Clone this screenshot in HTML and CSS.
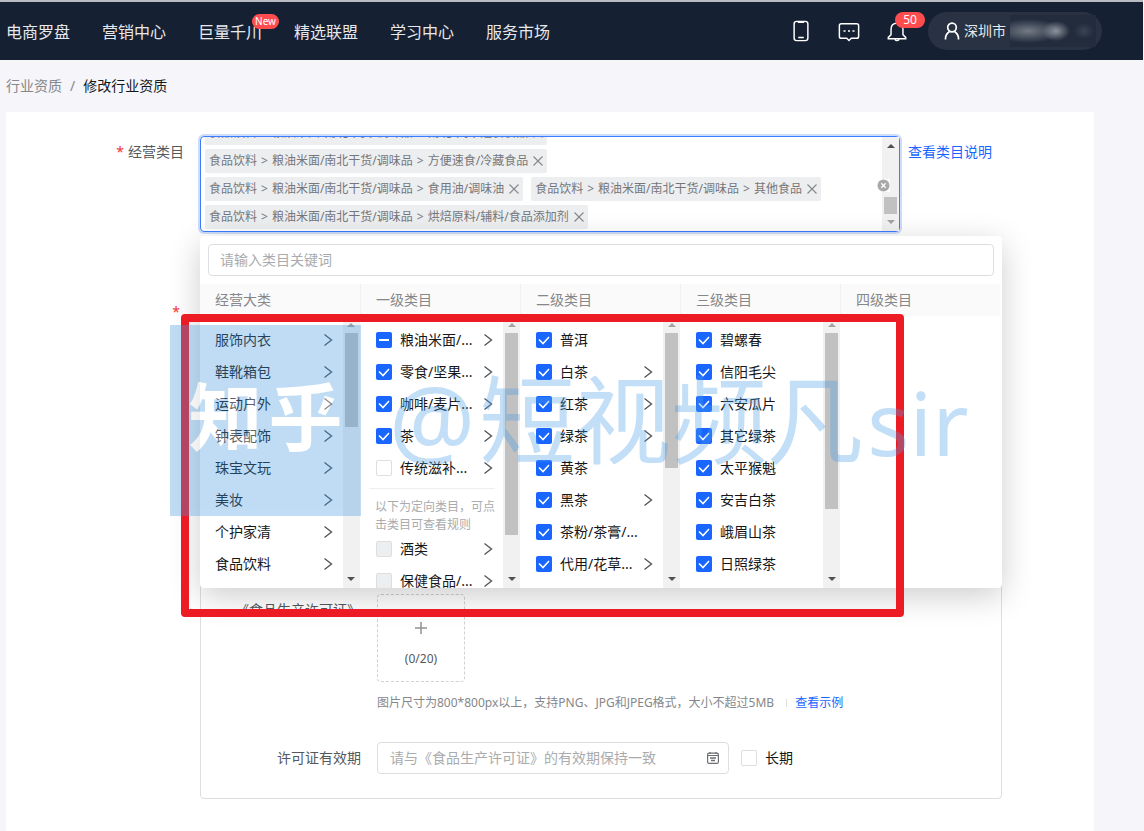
FILE: index.html
```html
<!DOCTYPE html>
<html lang="zh-CN">
<head>
<meta charset="utf-8">
<title>修改行业资质</title>
<link rel="stylesheet" href="styles.css">
</head>
<body>
<svg class="sprite" aria-hidden="true">
  <symbol id="chev" viewBox="0 0 10 14"><path d="M1.5 1.5 8.5 7l-7 5.500" fill="none" stroke="#55585c" stroke-width="1.400"/></symbol>
  <symbol id="close" viewBox="0 0 10 10"><path d="M.5.5l9 9M9.500.5l-9 9" fill="none" stroke="#85878a" stroke-width="1.100"/></symbol>
  <symbol id="up" viewBox="0 0 8 4"><path d="M0 4 4 0l4 4z" fill="currentColor"/></symbol>
  <symbol id="down" viewBox="0 0 8 4"><path d="M0 0h8L4 4z" fill="currentColor"/></symbol>
</svg>
<header class="topbar">
  <nav class="nav">
    <a href="#">电商罗盘</a>
    <a href="#">营销中心</a>
    <a href="#">巨量千川<span class="badge badge-new">New</span></a>
    <a href="#">精选联盟</a>
    <a href="#">学习中心</a>
    <a href="#">服务市场</a>
  </nav>
  <div class="tools">
    <button class="tool" aria-label="手机"><svg width="24" height="24" viewBox="0 0 24 24" fill="none" stroke="#fff" stroke-width="1.600"><rect x="4.500" y="1.500" width="15" height="21" rx="2.800"/><path d="M8.500 2.500h7M9 19h6"/></svg></button>
    <button class="tool" aria-label="消息"><svg width="24" height="24" viewBox="0 0 24 24" fill="none" stroke="#fff" stroke-width="1.600"><path d="M3.500 4h17q2 0 2 2v12q0 2-2 2h-6L12 22.300 9.500 20h-6q-2 0-2-2V6q0-2 2-2z"/><path d="M6 12h2.200M10.900 12h2.200M15.800 12H18"/></svg></button>
    <button class="tool" aria-label="通知"><svg width="24" height="24" viewBox="0 0 24 24" fill="none" stroke="#fff" stroke-width="1.600"><path d="M2.500 20.500h19v-1.500l-3-3v-6q0-6.500-6.500-6.500T5.500 10v6l-3 3z"/><path d="M9.500 21q2.500 3 5 0M12 1.500v2"/></svg><span class="badge badge-count">50</span></button>
    <button class="account"><svg width="16" height="18" viewBox="0 0 16 18" fill="none" stroke="#fff" stroke-width="1.700"><circle cx="8" cy="5.500" r="4.300"/><path d="M1.500 17.500v-1q0-4 3.800-6.700M14.500 17.500v-1q0-4-3.800-6.700"/></svg><span>深圳市</span><span class="redacted"></span></button>
  </div>
</header>

<nav class="crumbs" aria-label="面包屑"><a href="#">行业资质</a><span>/</span><b>修改行业资质</b></nav>

<main class="panel">
  <div class="form-row">
    <div class="label"><i class="req">*</i>经营类目</div>
    <div class="picker">
      <div class="tags">
        <div class="tag-row"><span class="tag">食品饮料<i>&gt;</i>粮油米面/南北干货/调味品<i>&gt;</i>南北干货/速食食品<button aria-label="移除"><svg><use href="#close"/></svg></button></span></div>
        <div class="tag-row"><span class="tag">食品饮料<i>&gt;</i>粮油米面/南北干货/调味品<i>&gt;</i>方便速食/冷藏食品<button aria-label="移除"><svg><use href="#close"/></svg></button></span></div>
        <div class="tag-row"><span class="tag">食品饮料<i>&gt;</i>粮油米面/南北干货/调味品<i>&gt;</i>食用油/调味油<button aria-label="移除"><svg><use href="#close"/></svg></button></span><span class="tag">食品饮料<i>&gt;</i>粮油米面/南北干货/调味品<i>&gt;</i>其他食品<button aria-label="移除"><svg><use href="#close"/></svg></button></span></div>
        <div class="tag-row"><span class="tag">食品饮料<i>&gt;</i>粮油米面/南北干货/调味品<i>&gt;</i>烘焙原料/辅料/食品添加剂<button aria-label="移除"><svg><use href="#close"/></svg></button></span></div>
      </div>
      <div class="scroll scroll-picker"><svg class="arrow dark"><use href="#up"/></svg><div class="track"><div class="thumb" style="margin-top:43px;height:17px"></div></div><svg class="arrow"><use href="#down"/></svg></div>
      <button class="clear" aria-label="清空"><svg width="13" height="13" viewBox="0 0 13 13"><circle cx="6.500" cy="6.500" r="6" fill="#a8a9ab"/><path d="M4.300 4.300l4.400 4.400M8.700 4.300 4.300 8.700" stroke="#fff" stroke-width="1.300"/></svg></button>
    </div>
    <a class="link doc-link" href="#">查看类目说明</a>
  </div>

  <div class="form-row second">
    <div class="label"><i class="req">*</i></div>
    <section class="card">
      <div class="card-row">
        <div class="card-label">《食品生产许可证》</div>
        <div>
          <button class="upload"><svg width="14" height="14" viewBox="0 0 14 14"><path d="M7 1v12M1 7h12" stroke="#8f9194" stroke-width="1.500"/></svg><span>(0/20)</span></button>
          <p class="hint"><span>图片尺寸为800*800px以上，支持PNG、JPG和JPEG格式，大小不超过5MB</span><span class="bar"></span><a class="link" href="#">查看示例</a></p>
        </div>
      </div>
      <div class="card-row date-row">
        <label class="card-label" for="valid">许可证有效期</label>
        <div class="date"><input id="valid" type="text" placeholder="请与《食品生产许可证》的有效期保持一致"><svg width="12" height="12" viewBox="0 0 12 12" fill="none" stroke="#6d6f73"><rect x=".6" y="1.200" width="10.800" height="10.200" rx="1.500" stroke-width="1.200"/><path d="M1 3.500h10M3 0v2M9 0v2" stroke-width="1.200"/><path d="M3 6h6M4 8.500h4" stroke-width="1.400"/></svg></div>
        <label class="long"><input class="box" type="checkbox">长期</label>
      </div>
    </section>
  </div>

  <div class="dropdown">
    <input class="search" type="text" placeholder="请输入类目关键词" aria-label="类目关键词">
    <div class="cols">
      <section class="col">
        <h3>经营大类</h3>
        <div class="body">
          <ul>
            <li><span>服饰内衣</span><svg class="chev"><use href="#chev"/></svg></li>
            <li><span>鞋靴箱包</span><svg class="chev"><use href="#chev"/></svg></li>
            <li><span>运动户外</span><svg class="chev"><use href="#chev"/></svg></li>
            <li><span>钟表配饰</span><svg class="chev"><use href="#chev"/></svg></li>
            <li><span>珠宝文玩</span><svg class="chev"><use href="#chev"/></svg></li>
            <li><span>美妆</span><svg class="chev"><use href="#chev"/></svg></li>
            <li><span>个护家清</span><svg class="chev"><use href="#chev"/></svg></li>
            <li><span>食品饮料</span><svg class="chev"><use href="#chev"/></svg></li>
          </ul>
          <div class="scroll"><svg class="arrow"><use href="#up"/></svg><div class="track"><div class="thumb" style="height:94px"></div></div><svg class="arrow dark"><use href="#down"/></svg></div>
        </div>
      </section>
      <section class="col">
        <h3>一级类目</h3>
        <div class="body">
          <ul>
            <li><label><input class="box part" type="checkbox" checked>粮油米面/...</label><svg class="chev"><use href="#chev"/></svg></li>
            <li><label><input class="box" type="checkbox" checked>零食/坚果...</label><svg class="chev"><use href="#chev"/></svg></li>
            <li><label><input class="box" type="checkbox" checked>咖啡/麦片...</label><svg class="chev"><use href="#chev"/></svg></li>
            <li><label><input class="box" type="checkbox" checked>茶</label><svg class="chev"><use href="#chev"/></svg></li>
            <li><label><input class="box" type="checkbox">传统滋补...</label><svg class="chev"><use href="#chev"/></svg></li>
            <li class="note">以下为定向类目，可点<br>击类目可查看规则</li>
            <li><label><input class="box" type="checkbox" disabled>酒类</label><svg class="chev"><use href="#chev"/></svg></li>
            <li><label><input class="box" type="checkbox" disabled>保健食品/...</label><svg class="chev"><use href="#chev"/></svg></li>
          </ul>
          <div class="scroll"><svg class="arrow"><use href="#up"/></svg><div class="track"><div class="thumb" style="height:202px"></div></div><svg class="arrow dark"><use href="#down"/></svg></div>
        </div>
      </section>
      <section class="col">
        <h3>二级类目</h3>
        <div class="body">
          <ul>
            <li><label><input class="box" type="checkbox" checked>普洱</label></li>
            <li><label><input class="box" type="checkbox" checked>白茶</label><svg class="chev"><use href="#chev"/></svg></li>
            <li><label><input class="box" type="checkbox" checked>红茶</label><svg class="chev"><use href="#chev"/></svg></li>
            <li><label><input class="box" type="checkbox" checked>绿茶</label><svg class="chev"><use href="#chev"/></svg></li>
            <li><label><input class="box" type="checkbox" checked>黄茶</label></li>
            <li><label><input class="box" type="checkbox" checked>黑茶</label><svg class="chev"><use href="#chev"/></svg></li>
            <li><label><input class="box" type="checkbox" checked>茶粉/茶膏/...</label></li>
            <li><label><input class="box" type="checkbox" checked>代用/花草...</label><svg class="chev"><use href="#chev"/></svg></li>
          </ul>
          <div class="scroll"><svg class="arrow"><use href="#up"/></svg><div class="track"><div class="thumb" style="height:135px"></div></div><svg class="arrow dark"><use href="#down"/></svg></div>
        </div>
      </section>
      <section class="col">
        <h3>三级类目</h3>
        <div class="body">
          <ul>
            <li><label><input class="box" type="checkbox" checked>碧螺春</label></li>
            <li><label><input class="box" type="checkbox" checked>信阳毛尖</label></li>
            <li><label><input class="box" type="checkbox" checked>六安瓜片</label></li>
            <li><label><input class="box" type="checkbox" checked>其它绿茶</label></li>
            <li><label><input class="box" type="checkbox" checked>太平猴魁</label></li>
            <li><label><input class="box" type="checkbox" checked>安吉白茶</label></li>
            <li><label><input class="box" type="checkbox" checked>峨眉山茶</label></li>
            <li><label><input class="box" type="checkbox" checked>日照绿茶</label></li>
          </ul>
          <div class="scroll"><svg class="arrow"><use href="#up"/></svg><div class="track"><div class="thumb" style="height:176px"></div></div><svg class="arrow dark"><use href="#down"/></svg></div>
        </div>
      </section>
      <section class="col">
        <h3>四级类目</h3>
      </section>
    </div>
  </div>

  <div class="frame"></div>
  <div class="watermark">
    <div class="wm-logo"><span>知</span><span>乎</span></div>
    <div class="wm-text"><span>@</span><span>短视频凡</span><span class="wm-latin">sir</span></div>
  </div>
</main>
</body>
</html>
```

FILE: styles.css
```css
* { box-sizing: border-box; }

body {
  margin: 0;
  height: 100vh;
  display: flex;
  flex-direction: column;
  overflow: hidden;
  background: #f5f5fa;
  color: #161719;
  font: 14px/20px "Noto Sans", "Noto Sans CJK SC", sans-serif;
}

button, input { font: inherit; color: inherit; }
button { border: 0; padding: 0; background: none; }
a { color: inherit; text-decoration: none; }
i { font-style: normal; }
ul, h3, p { margin: 0; padding: 0; list-style: none; }
.sprite { display: none; }

/* Top bar */
.topbar {
  flex: none;
  height: 60px;
  margin-right: 1px;
  padding: 0 41px 0 6px;
  display: flex;
  justify-content: space-between;
  align-items: center;
  border-top: 2px solid #b9bcc2;
  background: #162033;
  color: #e6e8eb;
}
.nav { display: flex; gap: 32px; padding-top: 2px; font-size: 16px; line-height: 24px; }
.nav a { position: relative; white-space: nowrap; }
.badge {
  position: absolute;
  border-radius: 8px;
  background: #ff4d4f;
  color: #fff;
  text-align: center;
}
.badge-new { left: 54px; top: -6px; width: 27px; font-size: 10px; line-height: 15px; }
.tools { display: flex; align-items: center; gap: 24px; }
.tool { position: relative; width: 24px; height: 24px; }
.tool svg { display: block; padding: 1px; }
.badge-count { left: 10px; top: -7px; width: 30px; font-size: 12px; line-height: 16px; }
.account {
  width: 174px;
  height: 38px;
  margin-left: -5px;
  padding: 0 6px 0 16px;
  display: flex;
  align-items: center;
  gap: 4px;
  border-radius: 19px;
  background: #283243;
  white-space: nowrap;
}
.account svg { flex: none; }
.redacted {
  flex: 1;
  height: 32px;
  background:
    radial-gradient(ellipse 14px 10px at 46px 50%, #8d939d, transparent),
    radial-gradient(ellipse 34px 12px at 18px 50%, #747b86, transparent),
    radial-gradient(ellipse 10px 8px at 74px 50%, #3b4452, transparent),
    #222c3d;
}

/* Breadcrumb */
.crumbs {
  flex: none;
  height: 52px;
  padding: 0 6px;
  display: flex;
  align-items: center;
  gap: 8px;
  color: #85878a;
}
.crumbs b { font-weight: 400; color: #161719; }

/* Form */
.panel {
  position: relative;
  flex: 1;
  margin: 0 50px 0 6px;
  padding-top: 24px;
  background: #fff;
}
.form-row { display: flex; }
.label { flex: none; width: 178px; margin-right: 16px; padding-top: 6px; text-align: right; color: #55585c; }
.req { color: #f5333c; margin-right: 4px; }
.link { color: #1966ff; }
.doc-link { padding: 6px 8px; white-space: nowrap; }

.picker {
  position: relative;
  width: 700px;
  height: 96px;
  display: flex;
  border: 1px solid #3c7cff;
  border-radius: 4px;
  box-shadow: 0 0 0 2px #cddcfb;
}
.tags {
  flex: 1;
  padding: 0 4px 2px;
  display: flex;
  flex-direction: column;
  justify-content: flex-end;
  gap: 4px;
  overflow: hidden;
}
.tag-row { display: flex; gap: 8px; }
.tag {
  height: 24px;
  flex: none;
  padding: 0 4px;
  border-radius: 2px;
  background: #edeef0;
  color: #75777b;
  font-size: 12px;
  line-height: 24px;
  white-space: nowrap;
}
.tag i { margin: 0 4px; }
.tag button { width: 10px; height: 10px; margin-left: 5px; vertical-align: -1px; }
.tag svg { display: block; width: 10px; height: 10px; }
.clear { position: absolute; right: 9px; top: 42px; width: 13px; height: 13px; background: #fff; }
.clear svg { display: block; }

/* Scroll bars */
.scroll {
  flex: none;
  width: 17px;
  padding: 7px 2px;
  display: flex;
  flex-direction: column;
  align-items: center;
  gap: 6px;
  background: #f1f1f1;
  color: #a3a3a3;
}
.arrow { width: 8px; height: 4px; flex: none; }
.arrow.dark { color: #505050; }
.track { flex: 1; width: 13px; }
.thumb { background: #c1c1c1; }

/* Qualification card */
.second { margin-top: 64px; }
.card {
  width: 802px;
  height: 503px;
  padding-top: 297px;
  border: 1px solid #dcdee1;
  border-radius: 4px;
}
.card-row { display: flex; }
.card-label { flex: none; width: 160px; margin-right: 16px; padding-top: 6px; text-align: right; color: #55585c; white-space: nowrap; }
.upload {
  width: 88px;
  height: 88px;
  padding-top: 14px;
  display: flex;
  flex-direction: column;
  align-items: center;
  justify-content: center;
  gap: 14px;
  border: 1px dashed #cfd1d4;
  border-radius: 4px;
  color: #55585c;
  font-size: 12px;
}
.hint { display: flex; align-items: center; margin-top: 11px; color: #85878a; font-size: 12px; white-space: nowrap; }
.bar { width: 1px; height: 8px; margin: 0 8px 0 12px; background: #dcdee1; }
.date-row { margin-top: 29px; }
.date {
  width: 352px;
  height: 32px;
  padding: 0 9px 0 12px;
  display: flex;
  align-items: center;
  border: 1px solid #dcdee1;
  border-radius: 4px;
}
.date input { flex: 1; border: 0; padding: 0; outline: 0; }
::placeholder { color: #a9abae; opacity: 1; }
.long { display: flex; align-items: center; margin-left: 12px; }

.box {
  appearance: none;
  flex: none;
  width: 16px;
  height: 16px;
  margin: 0 8px 0 0;
  border: 1px solid #dcdee1;
  border-radius: 2px;
  background: #fff;
}
.box:disabled { background: #edeef0; }
.box:checked {
  border: 0;
  background: #1966ff url("data:image/svg+xml,%3Csvg xmlns='http://www.w3.org/2000/svg' viewBox='0 0 16 16'%3E%3Cpath d='M3 7.500l4 4 6-6.500' fill='none' stroke='white' stroke-width='1.600'/%3E%3C/svg%3E");
}
.box.part:checked {
  background-image: url("data:image/svg+xml,%3Csvg xmlns='http://www.w3.org/2000/svg' viewBox='0 0 16 16'%3E%3Cpath d='M3 8h10' stroke='white' stroke-width='2'/%3E%3C/svg%3E");
}

/* Category dropdown */
.dropdown {
  position: absolute;
  left: 194px;
  top: 124px;
  width: 802px;
  padding-top: 8px;
  border-radius: 4px;
  background: #fff;
  box-shadow: 0 8px 32px rgba(0, 0, 0, .2);
}
.search {
  display: block;
  width: 786px;
  height: 32px;
  margin: 0 8px 8px;
  padding: 0 11px 2px;
  border: 1px solid #dcdee1;
  border-radius: 4px;
  background: #fff;
}
.cols { display: grid; grid-template-columns: repeat(5, 1fr); margin-right: 2px; }
.col h3 { height: 32px; padding-left: 15px; background: #fafafa; color: #85878a; font-size: 14px; font-weight: 400; line-height: 32px; }
.col + .col h3 { border-left: 1px solid #f0f0f0; }
.col + .col li { padding-left: 16px; }
.body { display: flex; height: 272px; overflow: hidden; }
.body ul { flex: 1; padding-top: 8px; }
.body li { display: flex; align-items: center; height: 32px; padding: 0 10px 0 15px; }
.body li > :first-child { flex: 1; }
.body label { display: flex; align-items: center; white-space: nowrap; }
.chev { flex: none; width: 10px; height: 14px; }
.col + .col .note {
  display: block;
  height: 45px;
  margin: 4px 8px 0 9px;
  padding: 9px 0 0 6px;
  border-top: 1px solid #edeef0;
  color: #a9abae;
  font-size: 12px;
  line-height: 18px;
  white-space: nowrap;
}

/* Annotation frame and watermark over the page */
.frame {
  position: absolute;
  left: 175px;
  top: 202px;
  width: 723px;
  height: 303px;
  border: 8px solid #ed1c24;
  border-radius: 4px;
}
.watermark {
  position: absolute;
  left: 164px;
  top: 213px;
  display: flex;
  gap: 28px;
  opacity: .33;
  color: #4a9fe8;
  pointer-events: none;
  white-space: nowrap;
}
.wm-logo {
  width: 191px;
  height: 191px;
  display: flex;
  justify-content: center;
  gap: 6px;
  background: #4097e0;
  color: #fff;
  font-size: 74px;
  font-weight: 700;
  line-height: 184px;
}
.wm-text { display: flex; align-items: baseline; gap: 4px; font-size: 96px; line-height: 188px; }
.wm-latin { font-size: 88px; }
```
